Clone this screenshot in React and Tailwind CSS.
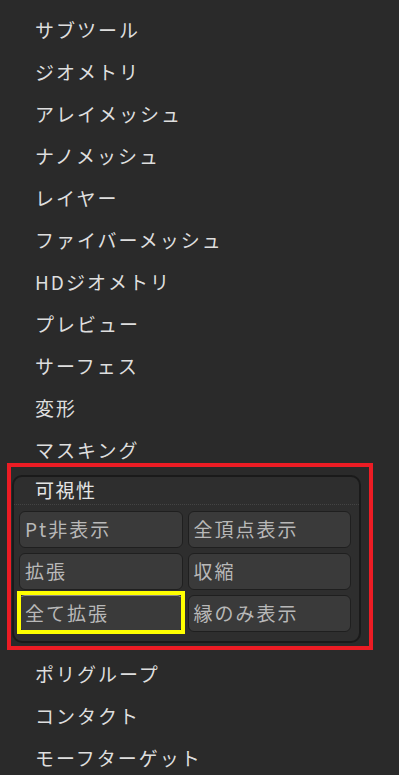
export default function App() {
  const top = ["サブツール","ジオメトリ","アレイメッシュ","ナノメッシュ","レイヤー","ファイバーメッシュ","HDジオメトリ","プレビュー","サーフェス","変形","マスキング"];
  const bottom = ["ポリグループ","コンタクト","モーフターゲット"];
  const font = { fontFamily: '"Noto Sans CJK JP", "Noto Sans", sans-serif' };
  const Row = ({ t }) => (
    <div className="h-[26px] flex items-center pl-[35px] text-[19px] tracking-[2px] text-[#dedede] whitespace-nowrap">{t}</div>
  );
  const Btn = ({ t, hl }) => (
    <div className={"relative h-[37px] rounded-[6px] border border-[#1f1f1f] bg-[#3a3a3a] flex items-center pl-[5px] text-[19px] tracking-[2px] text-[#b8b8b8] whitespace-nowrap " + (hl ? "border-t-[#8a8a8a]" : "")}>
      {t}
      {hl && <span className="absolute -left-[3px] -right-[3px] -top-[5px] -bottom-[3px] border-[4px] border-[#ffff00]" />}
    </div>
  );
  return (
    <div className="w-[399px] h-[775px] bg-[#2a2a2a] overflow-hidden" style={font}>
      <div className="flex flex-col gap-[16px] pt-[17px]">
        {top.map((t) => <Row key={t} t={t} />)}
      </div>
      <div className="ml-[7px] w-[366px] h-[187px] border-[4px] border-[#ec1c24] pl-[1px] pt-[8px] pr-[8px] pb-[3px]">
        <div className="h-full rounded-[10px] border-[2px] border-[#1a1a1a] bg-[#2e2e2e] flex flex-col">
          <div className="h-[28px] flex items-center pl-[21px] text-[19px] tracking-[1.5px] text-[#e4e4e4] border-b border-dotted border-[#444]">可視性</div>
          <div className="grid grid-cols-2 gap-x-[5px] gap-y-[5px] pl-[5px] pr-[8px] pt-[6px]">
            <Btn t="Pt非表示" />
            <Btn t="全頂点表示" />
            <Btn t="拡張" />
            <Btn t="収縮" />
            <Btn t="全て拡張" hl />
            <Btn t="縁のみ表示" />
          </div>
        </div>
      </div>
      <div className="flex flex-col gap-[16px] pt-[11px]">
        {bottom.map((t) => <Row key={t} t={t} />)}
      </div>
    </div>
  );
}
